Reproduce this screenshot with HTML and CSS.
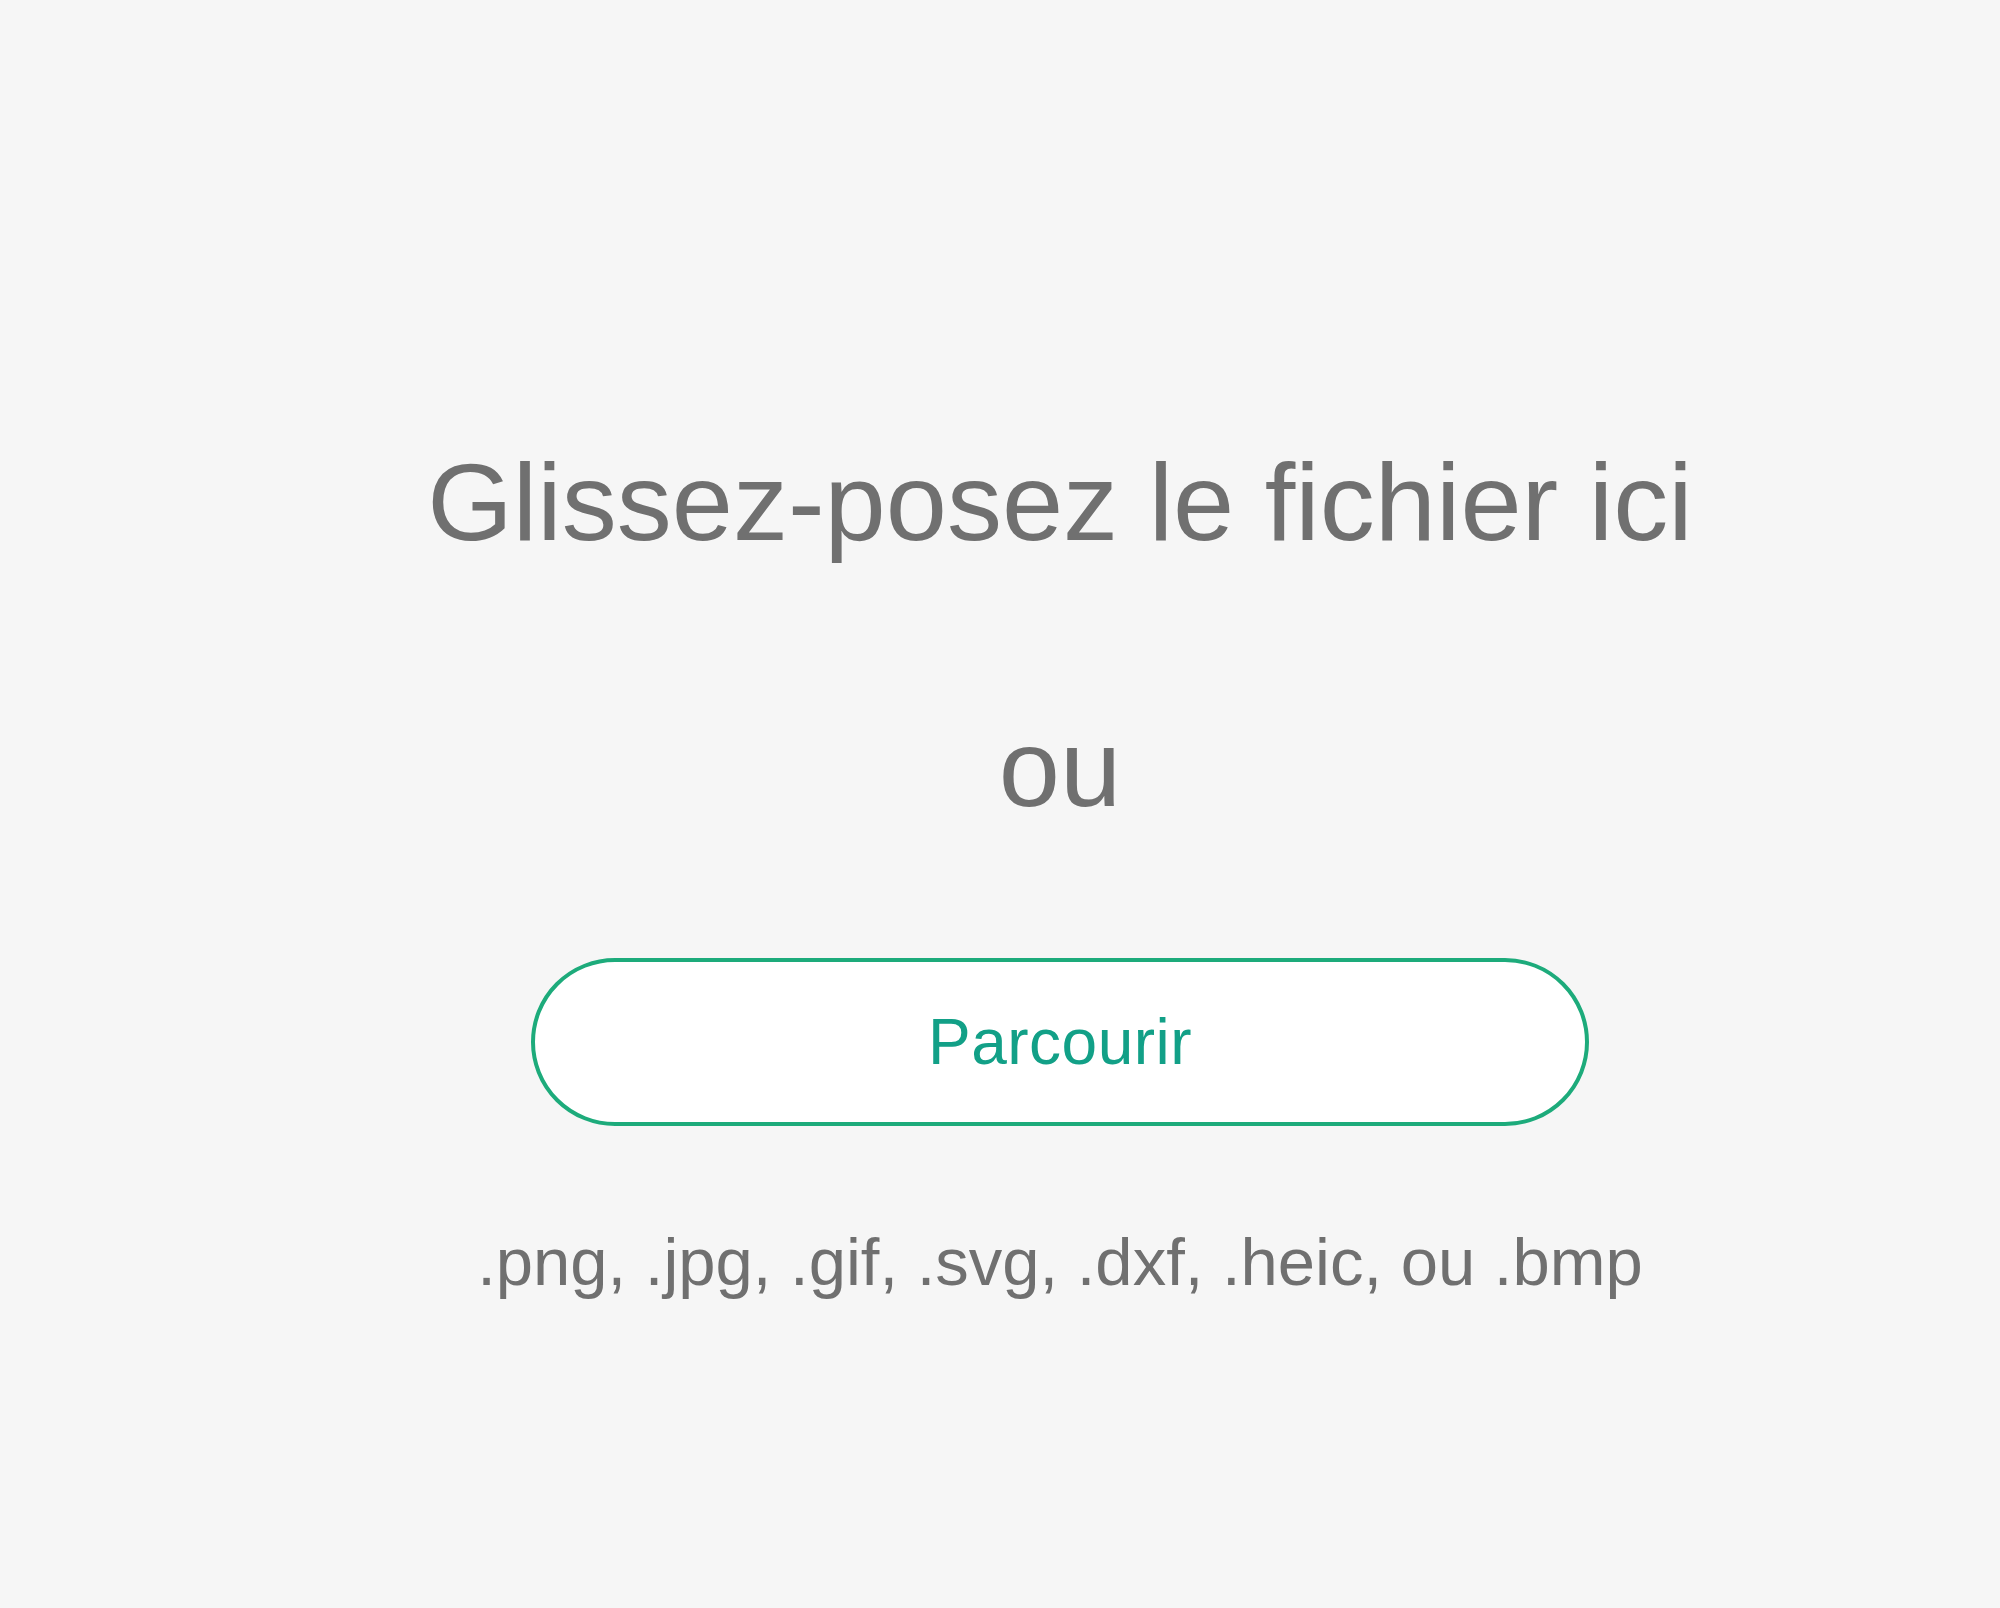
FILE: index.html
```html
<!DOCTYPE html>
<html lang="fr">
<head>
<meta charset="utf-8">
<title>Glissez-posez le fichier ici</title>
<link rel="stylesheet" href="styles.css">
</head>
<body>
<main class="dropzone">
  <h1 class="drop-title">Glissez-posez le fichier ici</h1>
  <p class="drop-or">ou</p>
  <button class="browse-btn" type="button">Parcourir</button>
  <p class="drop-formats">.png, .jpg, .gif, .svg, .dxf, .heic, ou .bmp</p>
</main>
</body>
</html>
```

FILE: styles.css
```css
html, body {
  margin: 0;
  padding: 0;
  background: #f6f6f6;
}

body {
  font-family: "Liberation Sans", Arial, sans-serif;
  color: #707070;
  min-height: 1608px;
}

.dropzone {
  display: flex;
  flex-direction: column;
  align-items: center;
  padding: 447px 0 0 120px;
}

.drop-title {
  margin: 0;
  font-size: 110px;
  line-height: 110px;
  font-weight: 400;
  white-space: nowrap;
}

.drop-or {
  margin: 156px 0 0;
  font-size: 110px;
  line-height: 110px;
}

.browse-btn {
  margin-top: 135px;
  box-sizing: border-box;
  width: 1058px;
  height: 168px;
  border: 4px solid #1dab7b;
  border-radius: 84px;
  background: #ffffff;
  color: #12a087;
  font-family: "Liberation Sans", Arial, sans-serif;
  font-size: 64px;
  line-height: 64px;
  letter-spacing: 0.5px;
  padding: 0;
  cursor: pointer;
}

.drop-formats {
  margin: 102px 0 0;
  font-size: 67px;
  line-height: 67px;
  white-space: nowrap;
}
```
